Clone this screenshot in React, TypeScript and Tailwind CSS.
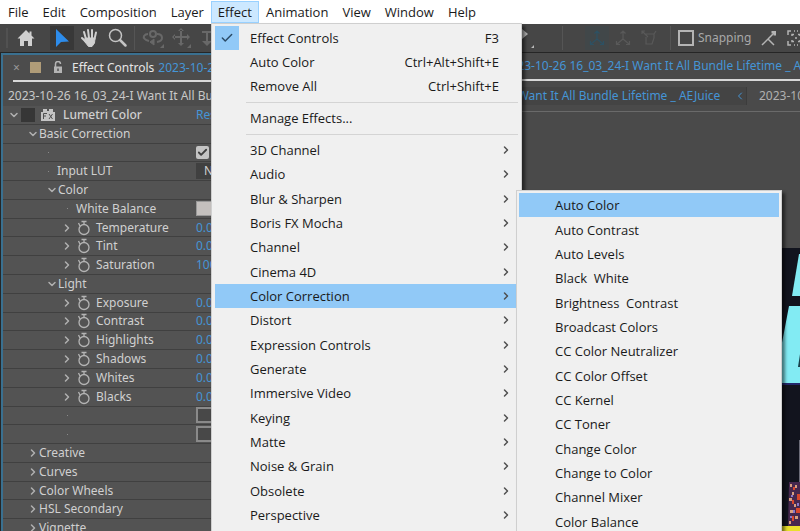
import { ReactNode } from "react";
import clsx from "clsx";
import { Check, ChevronDown, ChevronLeft, ChevronRight } from "lucide-react";

const MENUS = ["File", "Edit", "Composition", "Layer", "Effect", "Animation", "View", "Window", "Help"];

const CATEGORIES = [
  "3D Channel",
  "Audio",
  "Blur & Sharpen",
  "Boris FX Mocha",
  "Channel",
  "Cinema 4D",
  "Color Correction",
  "Distort",
  "Expression Controls",
  "Generate",
  "Immersive Video",
  "Keying",
  "Matte",
  "Noise & Grain",
  "Obsolete",
  "Perspective",
];

const COLOR_EFFECTS = [
  "Auto Color",
  "Auto Contrast",
  "Auto Levels",
  "Black \u00a0White",
  "Brightness \u00a0Contrast",
  "Broadcast Colors",
  "CC Color Neutralizer",
  "CC Color Offset",
  "CC Kernel",
  "CC Toner",
  "Change Color",
  "Change to Color",
  "Channel Mixer",
  "Color Balance",
];

const COMP_NAME = "2023-10-26 16_03_24-I Want It All Bundle Lifetime _ AEJuice";

function MenuBar() {
  return (
    <nav className="flex h-6 shrink-0 items-center bg-white pl-px font-['Open_Sans','Noto_Sans',sans-serif] text-[13px] text-[#1a1a1a]">
      {MENUS.map((name) => (
        <button
          key={name}
          type="button"
          className={clsx(
            "h-[22px] shrink-0 border px-[6px]",
            name === "Effect" ? "border-[#99d1ff] bg-[#cce8ff]" : "border-transparent",
          )}
        >
          {name}
        </button>
      ))}
    </nav>
  );
}

function ToolButton({ label, active, children }: { label: string; active?: boolean; children: ReactNode }) {
  return (
    <button
      type="button"
      aria-label={label}
      className={clsx("flex h-6 w-6 shrink-0 items-center justify-center", active && "bg-[#383838]")}
    >
      {children}
    </button>
  );
}

function Divider() {
  return <span className="h-6 w-px shrink-0 bg-[#555]" />;
}

function AxisIcon({ color }: { color: string }) {
  return (
    <svg width="18" height="18" viewBox="0 0 18 18" fill="none" stroke={color} strokeWidth="1.2">
      <path d="M9 10V2M6.500 4.500 9 2l2.500 2.500M9 10l-6 5M9 10l6 5M2.500 12v3.500H6M15.500 12v3.500H12" />
    </svg>
  );
}

function Toolbar() {
  return (
    <div className="flex h-7 shrink-0 items-center bg-[#464646]">
      <div className="flex w-[520px] shrink-0 items-center overflow-hidden pl-[6px]">
        <span className="mr-[6px] h-5 w-[2px] shrink-0 bg-[#515151]" />
        <ToolButton label="Home">
          <svg width="18" height="18" viewBox="0 0 18 18" fill="#d0d0d0">
            <path d="M9 1 0.500 9.500H3V17h4v-5h4v5h4V9.500h2.500L14.500 6.400V2.500h-2v2z" />
          </svg>
        </ToolButton>
        <span className="w-3 shrink-0" />
        <ToolButton label="Selection" active>
          <svg width="16" height="18" viewBox="0 0 16 18" fill="#2d8ceb">
            <path d="M2 0v18l5-5 8-.5z" />
          </svg>
        </ToolButton>
        <span className="w-1 shrink-0" />
        <ToolButton label="Hand">
          <svg width="20" height="20" viewBox="0 0 20 20" fill="none" stroke="#d0d0d0" strokeWidth="2" strokeLinecap="round">
            <path d="M6 11 4 4M9 10 8 2M12 10V2M14.500 11 16 4.500M6 14 2 10" />
            <path d="M5.500 10h9.500l-.5 5-2.500 3.500H8.500L5 14z" fill="#d0d0d0" strokeWidth="1" />
          </svg>
        </ToolButton>
        <span className="w-1 shrink-0" />
        <ToolButton label="Zoom">
          <svg width="20" height="20" viewBox="0 0 20 20" fill="none" stroke="#c4c4c4">
            <circle cx="7.500" cy="7.500" r="6" strokeWidth="1.500" />
            <path d="m12 12 5.500 5.500" strokeWidth="2.500" strokeLinecap="round" />
          </svg>
        </ToolButton>
        <span className="w-1 shrink-0" />
        <Divider />
        <span className="w-[6px] shrink-0" />
        <ToolButton label="Orbit camera">
          <svg width="22" height="20" viewBox="0 0 22 20" fill="none" stroke="#686868" strokeWidth="2">
            <path d="M7 13C3 12 1 10 2 8c1-1.500 3-2 4-2M15 6c3 0 5 1.500 5 4 0 2-2 3.500-5 4" />
            <circle cx="11" cy="6" r="3" />
            <path d="M12 11v6l-4-3z" fill="#686868" strokeWidth="1" />
            <path d="M22 16v4h-4z" fill="#686868" stroke="none" />
          </svg>
        </ToolButton>
        <span className="w-1 shrink-0" />
        <ToolButton label="Pan camera">
          <svg width="20" height="20" viewBox="0 0 20 20" fill="#686868">
            <path d="M9 2v6H3v2h6v6h2v-6h6V8h-6V2zM10 0l3 3H7zM10 18l3-3H7zM1 9l3-3v6zM19 9l-3-3v6zM20 16v4h-4z" />
          </svg>
        </ToolButton>
        <span className="w-1 shrink-0" />
        <ToolButton label="Dolly camera">
          <svg width="20" height="20" viewBox="0 0 20 20" fill="#686868">
            <path d="M3 3h10v2H9v8h4l-5 5-5-5h4V5H3z" />
          </svg>
        </ToolButton>
      </div>
      <svg className="shrink-0" width="14" height="24" viewBox="0 0 14 24" fill="#b8b8b8">
        <path d="M2 3 8 8 2 13zM14 19v3h-3z" />
      </svg>
      <span className="w-7 shrink-0" />
      <Divider />
      <div className="flex shrink-0 items-center gap-[2px] pl-[22px] pr-[9px]">
        <span className="flex h-6 w-6 items-center justify-center bg-[#414749]">
          <AxisIcon color="#2d5163" />
        </span>
        <span className="flex h-6 w-6 items-center justify-center">
          <AxisIcon color="#595959" />
        </span>
        <span className="flex h-6 w-6 items-center justify-center">
          <svg width="18" height="18" viewBox="0 0 18 18" fill="none" stroke="#595959" strokeWidth="1.200">
            <path d="M2 5V2h3M2 2l6 6M5 5h9v4l-2 6H6V8M14 5l2-3" />
          </svg>
        </span>
      </div>
      <Divider />
      <label className="flex shrink-0 items-center gap-1 pl-[7px] text-[12px] text-[#a8a8a8]">
        <input type="checkbox" className="h-4 w-4 appearance-none border-2 border-[#b4b4b4]" />
        Snapping
      </label>
      <div className="flex shrink-0 items-center gap-[10px] pl-[10px]">
        <svg width="16" height="16" viewBox="0 0 16 16" fill="none" stroke="#b4b4b4" strokeWidth="1.500">
          <path d="M1 15l6-6 6 6M7 9l6-6" />
          <path d="M10.500 1H15v4.500H12.500V3.500H10.500z" fill="#b4b4b4" stroke="none" />
        </svg>
        <svg width="18" height="16" viewBox="0 0 18 16" fill="none" stroke="#b4b4b4" strokeWidth="1.500">
          <path d="M1 5V1h3M14 1h3v4M1 11v4h3M14 15h3v-4M5 6V4.500h2M11 4.500h2V6M5 10v1.500h2M11 11.500h2V10" />
          <path d="M8 8h2M7 1h1M10 1h1M7 15h1M10 15h1" />
        </svg>
      </div>
    </div>
  );
}

function Stopwatch() {
  return (
    <svg className="shrink-0" width="14" height="16" viewBox="0 0 14 16" fill="none" stroke="#b4b4b4" strokeWidth="1.300">
      <circle cx="7" cy="9.500" r="5" />
      <path d="M7 4.500V1.500M4.500 1.500h5M1.500 3l1.500 3" />
    </svg>
  );
}

function Lock() {
  return (
    <svg className="shrink-0" width="10" height="13" viewBox="0 0 10 13">
      <path d="M2.500 6V3a2.500 2.500 0 0 1 5 0" fill="none" stroke="#b4b4b4" strokeWidth="1.500" />
      <path d="M1 5.500h8V12H1zM4.300 7.500v2.500h1.400V7.500z" fill="#b4b4b4" fillRule="evenodd" />
    </svg>
  );
}

function Row({ indent, control, children }: { indent: string; control?: ReactNode; children?: ReactNode }) {
  return (
    <div className="flex min-h-4 flex-1 basis-0 items-center overflow-hidden border-b border-[#404040] pl-px">
      <div className={clsx("flex w-[192px] shrink-0 items-center", indent)}>{children}</div>
      {control}
    </div>
  );
}

function Group({ name, open, indent }: { name: string; open?: boolean; indent: string }) {
  const Icon = open ? ChevronDown : ChevronRight;
  return (
    <Row indent={indent}>
      <button type="button" className="flex items-center">
        <Icon size={12} strokeWidth={3} className="text-[#b0b0b0]" />
        {name}
      </button>
    </Row>
  );
}

function Property({ name, value }: { name: string; value: string }) {
  return (
    <Row indent="pl-[57px]" control={<span className="text-[#4595d6]">{value}</span>}>
      <ChevronRight size={12} strokeWidth={3} className="mr-1 text-[#b0b0b0]" />
      <Stopwatch />
      <span className="pl-[5px]">{name}</span>
    </Row>
  );
}

function Dot() {
  return <span className="h-px w-px bg-[#8a8a8a]" />;
}

function EffectControls() {
  return (
    <section className="ml-px flex w-[373px] shrink-0 flex-col overflow-hidden border-x-2 border-t-2 border-[#3a7090] bg-[#4c4c4c]">
      <header className="ml-[10px] flex h-[27px] shrink-0 items-center whitespace-nowrap border-b-2 border-[#d8d8d8]">
        <button type="button" aria-label="Close panel" className="w-[17px] shrink-0 text-left text-[#999]">
          ×
        </button>
        <span className="mr-3 h-[11px] w-[11px] shrink-0 bg-[#b09c78]" />
        <Lock />
        <h2 className="shrink-0 pl-[9px] pr-1 text-[#e6e6e6]">Effect Controls</h2>
        <span className="text-[#4595d6]">{COMP_NAME}</span>
      </header>
      <p className="flex h-6 shrink-0 items-center whitespace-nowrap pl-[5px] pt-1 text-[#c8c8c8]">{COMP_NAME}</p>
      <div className="-mb-[7px] flex flex-1 flex-col bg-[#535353] text-[#d0d0d0]">
        <Row
          indent="pl-1"
          control={
            <button type="button" className="text-[#4595d6]">
              Reset
            </button>
          }
        >
          <ChevronDown size={12} strokeWidth={3} className="mr-px text-[#b0b0b0]" />
          <span className="mr-[6px] h-[14px] w-[14px] bg-[#363636]" />
          <svg width="14" height="12" viewBox="0 0 14 12">
            <path d="M0 3h2V0h4v2h2V0h4v3h2v9H0z" fill="#c4c4c4" />
            <path d="M2.500 10V4.500H6M2.500 7H5M8 5l3.500 5M11.500 5 8 10" stroke="#505050" fill="none" />
          </svg>
          <span className="pl-2 font-medium">Lumetri Color</span>
        </Row>
        <Group name="Basic Correction" open indent="pl-[23px]" />
        <Row
          indent="pl-11"
          control={
            <label className="grid items-center justify-items-center">
              <input
                type="checkbox"
                defaultChecked
                aria-label="Basic Correction active"
                className="h-[13px] w-[13px] appearance-none rounded-xs bg-[#c4c4c4] [grid-area:1/1]"
              />
              <Check size={11} strokeWidth={4} className="pointer-events-none text-[#404040] [grid-area:1/1]" />
            </label>
          }
        >
          <Dot />
        </Row>
        <Row
          indent="pl-11"
          control={
            <select id="lut" className="h-4 w-24 appearance-none bg-[#404040] pl-2 text-[#d0d0d0]">
              <option>None</option>
            </select>
          }
        >
          <Dot />
          <label htmlFor="lut" className="pl-2">
            Input LUT
          </label>
        </Row>
        <Group name="Color" open indent="pl-[42px]" />
        <Row
          indent="pl-[63px]"
          control={<button type="button" aria-label="White balance color" className="h-[15px] w-8 border border-[#999] bg-[#c4c0be]" />}
        >
          <Dot />
          <span className="pl-2">White Balance</span>
        </Row>
        <Property name="Temperature" value="0.0" />
        <Property name="Tint" value="0.0" />
        <Property name="Saturation" value="100.0" />
        <Group name="Light" open indent="pl-[42px]" />
        <Property name="Exposure" value="0.00" />
        <Property name="Contrast" value="0.0" />
        <Property name="Highlights" value="0.0" />
        <Property name="Shadows" value="0.0" />
        <Property name="Whites" value="0.0" />
        <Property name="Blacks" value="0.0" />
        {["Auto", "Reset light"].map((name) => (
          <Row
            key={name}
            indent="pl-[63px]"
            control={<button type="button" aria-label={name} className="h-4 w-24 border-2 border-[#8a8a8a] bg-[#484848]" />}
          >
            <Dot />
          </Row>
        ))}
        <Group name="Creative" indent="pl-[23px]" />
        <Group name="Curves" indent="pl-[23px]" />
        <Group name="Color Wheels" indent="pl-[23px]" />
        <Group name="HSL Secondary" indent="pl-[23px]" />
        <Group name="Vignette" indent="pl-[23px]" />
      </div>
    </section>
  );
}

// Right edge of the footage shown in the composition viewer
function Footage() {
  return (
    <svg className="h-full w-5" viewBox="0 0 20 283" preserveAspectRatio="xMaxYMin slice">
      <path d="M0 0h20v283H0z" fill="#12141e" />
      <path d="M19 6 12 48h8V6z" fill="#82ebf3" />
      <path d="M9 58h11v77H0V100h1z" fill="#82ebf3" />
      <path d="M20 106l-2 13h2z" fill="#18414a" />
      <path d="M0 135h20v2H0z" fill="#23286a" />
      <path d="M19 192h1v50h-1z" fill="#6c6c78" />
      <path d="M9 234h11v44H8z" fill="#46284e" />
      <path
        d="M10 236h2v3h-2zM15 237h2v3h-2zM12 244h2v3h-2zM9 250h3v3H9zM14 256h2v3h-2zM10 262h3v3h-3zM15 268h3v3h-3zM9 273h2v3H9z"
        fill="#d99f80"
      />
      <path d="M13 239h2v3h-2zM17 246h3v6h-3zM12 252h2v4h-2zM16 260h4v5h-4zM12 268h2v5h-2z" fill="#d8472e" />
      <path d="M11 247h2v2h-2zM17 255h2v3h-2zM13 262h2v3h-2zM10 268h2v2h-2z" fill="#8b78c8" />
      <path d="M2 278h18v5H2z" fill="#e9e02c" />
    </svg>
  );
}

function CompositionPanel() {
  return (
    <section className="flex min-w-0 flex-1 flex-col overflow-hidden bg-[#4a4a4a]">
      <header className="flex h-7 shrink-0 items-center whitespace-nowrap border-b-2 border-[#d8d8d8] pl-[13px] text-[#4595d6]">
        <span className="mr-2 h-[11px] w-[11px] shrink-0 bg-[#b09c78]" />
        <Lock />
        <h2 className="shrink-0 pl-2 pr-1 text-[#dedede]">Composition</h2>
        <span>{COMP_NAME}</span>
      </header>
      <div className="flex h-[31px] shrink-0 items-center whitespace-nowrap border-b border-[#6a6a6a]">
        <div className="mr-3 flex h-[18px] w-[369px] shrink-0 items-center border-r border-[#3c3c3c] bg-[#444] pl-[11px]">
          <a href="#comp" className="w-[345px] shrink-0 text-[#4595d6]">
            {COMP_NAME}
          </a>
          <ChevronLeft size={12} className="shrink-0 text-[#4595d6]" />
        </div>
        <a href="#parent" className="text-[#b0b0b0]">
          {COMP_NAME}
        </a>
      </div>
      <div className="h-[136px] shrink-0" />
      <div className="flex min-h-0 flex-1 justify-end bg-[#12141e]">
        <Footage />
      </div>
    </section>
  );
}

function MenuItem({ name, shortcut, checked }: { name: string; shortcut?: string; checked?: boolean }) {
  return (
    <button type="button" role="menuitem" className="flex h-6 shrink-0 items-center pr-[19px] text-left">
      <span className={clsx("mr-[11px] flex h-6 w-6 items-center justify-center", checked && "bg-[#91c9f7]")}>
        {checked && <Check size={14} strokeWidth={2.5} className="text-[#2a4a66]" />}
      </span>
      <span className="flex-1">{name}</span>
      <span>{shortcut}</span>
    </button>
  );
}

function Separator() {
  return (
    <div className="flex h-2 shrink-0 items-center pl-[31px]">
      <span className="h-px w-full bg-[#d4d4d4]" />
    </div>
  );
}

function EffectMenu() {
  return (
    <div
      role="menu"
      aria-label="Effect"
      className="absolute bottom-0 left-[211px] top-[23px] flex w-[311px] flex-col border-x border-t border-[#cfcfcf] bg-[#f0f0f0] px-[3px] pb-1 pt-[2px] font-['Open_Sans','Noto_Sans',sans-serif] text-[13px] text-[#1a1a1a] shadow-[3px_3px_3px_rgba(0,0,0,0.5)]"
    >
      <MenuItem name="Effect Controls" shortcut="F3" checked />
      <MenuItem name="Auto Color" shortcut="Ctrl+Alt+Shift+E" />
      <MenuItem name="Remove All" shortcut="Ctrl+Shift+E" />
      <Separator />
      <MenuItem name="Manage Effects..." />
      <Separator />
      {CATEGORIES.map((name) => (
        <button
          key={name}
          type="button"
          role="menuitem"
          aria-haspopup="menu"
          className={clsx(
            "flex min-h-5 flex-1 basis-0 items-center justify-between pl-[35px] pr-[6px] text-left",
            name === "Color Correction" && "bg-[#91c9f7]",
          )}
        >
          {name}
          <ChevronRight size={12} strokeWidth={3} className="text-[#505050]" />
        </button>
      ))}
    </div>
  );
}

function ColorCorrectionMenu() {
  return (
    <div
      role="menu"
      aria-label="Color Correction"
      className="absolute -bottom-[3px] left-[516px] top-[190px] flex w-[266px] flex-col border-x border-t border-[#cfcfcf] bg-[#f0f0f0] px-[2px] pt-[2px] font-['Open_Sans','Noto_Sans',sans-serif] text-[13px] text-[#1a1a1a] shadow-[3px_3px_3px_rgba(0,0,0,0.5)]"
    >
      {COLOR_EFFECTS.map((name, i) => (
        <button
          key={name}
          type="button"
          role="menuitem"
          className={clsx("min-h-5 flex-1 basis-0 pl-9 text-left", i === 0 && "bg-[#91c9f7]")}
        >
          {name}
        </button>
      ))}
    </div>
  );
}

export default function App() {
  return (
    <div className="relative flex h-screen flex-col overflow-hidden bg-[#262626] font-['Noto_Sans','Open_Sans',sans-serif] text-[12px] leading-4">
      <MenuBar />
      <Toolbar />
      <main className="flex min-h-0 flex-1 gap-1 pt-px">
        <EffectControls />
        <CompositionPanel />
      </main>
      <EffectMenu />
      <ColorCorrectionMenu />
    </div>
  );
}
